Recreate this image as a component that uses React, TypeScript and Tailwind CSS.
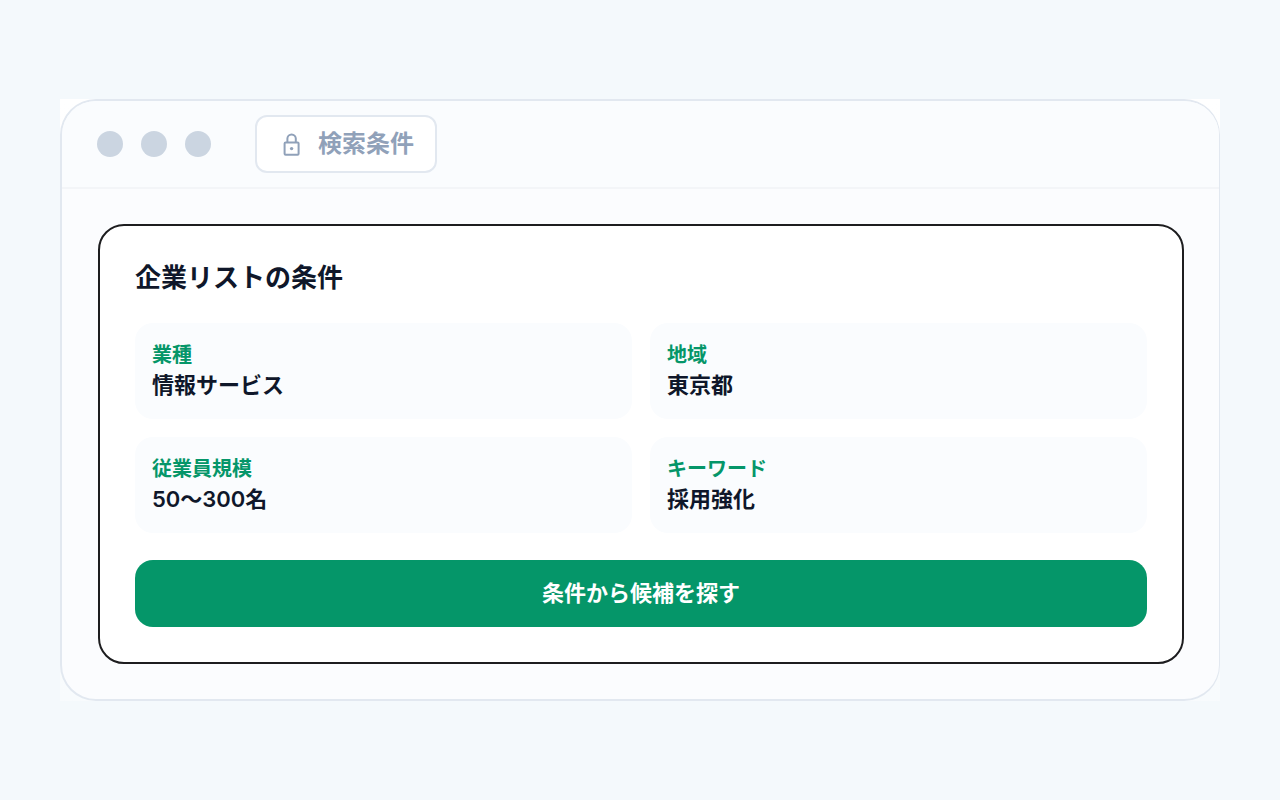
const conditions = [
  { label: "業種", value: "情報サービス" },
  { label: "地域", value: "東京都" },
  { label: "従業員規模", value: "50〜300名" },
  { label: "キーワード", value: "採用強化" },
];

function LockIcon() {
  return (
    <svg
      className="h-6 w-5 shrink-0"
      viewBox="0 0 20 24"
      fill="none"
      stroke="currentColor"
      strokeWidth="2"
      strokeLinejoin="round"
      aria-hidden="true"
    >
      <rect x="2.6" y="10.4" width="14" height="12.4" rx="1" />
      <path d="M5.4 10.4V6.6a4.2 4.2 0 0 1 8.4 0v3.8" />
      <circle cx="9.6" cy="16.6" r="1.7" fill="currentColor" stroke="none" />
    </svg>
  );
}

function WindowBar() {
  return (
    <header className="flex h-[88px] items-center border-b-2 border-[#f3f5f8] bg-[#fafcfe] pl-[35px]">
      <div className="flex gap-[18px]">
        {["close", "minimize", "maximize"].map((name) => (
          <span key={name} className="size-[26px] rounded-full bg-[#cbd5e1]" />
        ))}
      </div>
      <div className="ml-11 flex h-[58px] items-center gap-4 rounded-xl border-2 border-slate-200 bg-white pr-[21px] pl-[25px] text-slate-400">
        <LockIcon />
        <span className="text-[24px] leading-8 font-bold">検索条件</span>
      </div>
    </header>
  );
}

export default function App() {
  return (
    <div className="flex min-h-screen items-center bg-[#f4f9fc] px-[60px] font-['Inter','Noto_Sans_CJK_JP',sans-serif] text-[#0f172a]">
      <div className="w-full bg-gradient-to-b from-white to-[#f8fbfd]">
        <div className="overflow-hidden rounded-[36px] border-2 border-r border-[#e2e8f0] bg-[#fbfcfe]">
          <WindowBar />
          <main className="py-[35px] pr-[35px] pl-9">
            <section className="rounded-[26px] border-2 border-[#1d1d1f] bg-white p-[35px]">
              <h1 className="text-[26px] leading-[34px] font-bold">企業リストの条件</h1>
              <dl className="mt-7 grid grid-cols-2 gap-[18px]">
                {conditions.map((condition) => (
                  <div key={condition.label} className="h-24 rounded-[18px] bg-[#fafcfe] px-[17px] pt-[18px]">
                    <dt className="text-[20px] leading-7 font-bold text-[#059669]">{condition.label}</dt>
                    <dd className="text-[22px] leading-8 font-semibold">{condition.value}</dd>
                  </div>
                ))}
              </dl>
              <button
                type="button"
                className="mt-[27px] h-[67px] w-full rounded-[18px] bg-[#059669] pb-0.5 text-[22px] leading-8 font-bold text-white"
              >
                条件から候補を探す
              </button>
            </section>
          </main>
        </div>
      </div>
    </div>
  );
}
